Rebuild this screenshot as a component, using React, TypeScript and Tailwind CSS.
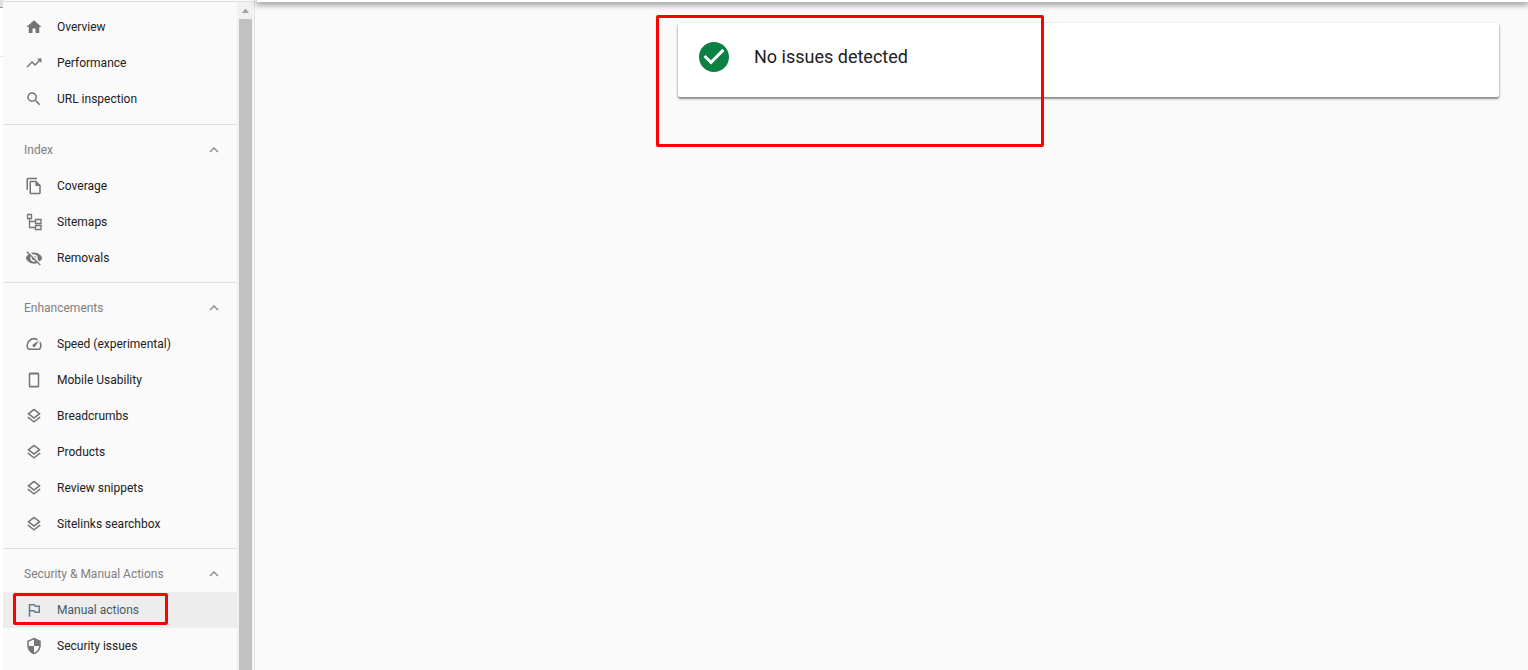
import React from "react";
import type { IconType } from "react-icons";
import {
  MdCheckCircle,
  MdExpandLess,
  MdHome,
  MdOutlineFileCopy,
  MdOutlineLayers,
  MdOutlinedFlag,
  MdSearch,
  MdSecurity,
  MdSpeed,
  MdTrendingUp,
  MdVisibilityOff,
} from "react-icons/md";

type IconProps = { className?: string };

type NavEntry = {
  label: string;
  icon: IconType | ((props: IconProps) => React.JSX.Element);
};

type NavGroup = {
  title?: string;
  items: NavEntry[];
};

const SitemapIcon = ({ className }: IconProps) => (
  <svg className={className} viewBox="0 0 18 18" fill="none" stroke="currentColor" strokeWidth="1.3">
    <path d="M2.500 1.500h4v4h-4zM10.500 6.500h5.500v4h-5.500zM10.500 12.500h5.500v4h-5.500zM4.500 5.500v9h6M4.500 8.500h6" />
  </svg>
);

const PhoneIcon = ({ className }: IconProps) => (
  <svg className={className} viewBox="0 0 24 24" fill="currentColor">
    <path d="M17 2H7c-1.100 0-2 .9-2 2v16c0 1.100.9 2 2 2h10c1.100 0 2-.9 2-2V4c0-1.100-.9-2-2-2zm0 17.500H7v-15h10v15z" />
  </svg>
);

const groups: NavGroup[] = [
  {
    items: [
      { label: "Overview", icon: MdHome },
      { label: "Performance", icon: MdTrendingUp },
      { label: "URL inspection", icon: MdSearch },
    ],
  },
  {
    title: "Index",
    items: [
      { label: "Coverage", icon: MdOutlineFileCopy },
      { label: "Sitemaps", icon: SitemapIcon },
      { label: "Removals", icon: MdVisibilityOff },
    ],
  },
  {
    title: "Enhancements",
    items: [
      { label: "Speed (experimental)", icon: MdSpeed },
      { label: "Mobile Usability", icon: PhoneIcon },
      { label: "Breadcrumbs", icon: MdOutlineLayers },
      { label: "Products", icon: MdOutlineLayers },
      { label: "Review snippets", icon: MdOutlineLayers },
      { label: "Sitelinks searchbox", icon: MdOutlineLayers },
    ],
  },
  {
    title: "Security & Manual Actions",
    items: [
      { label: "Manual actions", icon: MdOutlinedFlag },
      { label: "Security issues", icon: MdSecurity },
    ],
  },
];

const NavItem = ({ label, icon: Icon, active }: NavEntry & { active: boolean }) => (
  <li className={active ? "relative bg-[#ededed]" : ""}>
    <a
      href="#"
      aria-current={active ? "page" : undefined}
      className={`flex h-9 items-center gap-3.5 pl-[22px] ${active ? "text-[#455a64]" : "text-[#212121]"}`}
    >
      <Icon className={`size-[18px] shrink-0 ${active ? "text-[#607d8b]" : "text-[#757575]"}`} />
      {label}
    </a>
    {active && (
      <div className="pointer-events-none absolute top-px left-2.5 h-8 w-[155px] rounded-xs border-3 border-[#ff0000]" />
    )}
  </li>
);

const Sidebar = () => (
  <nav className="min-w-0 flex-1">
    {groups.map((group, i) => (
      <section
        key={i}
        className={`border-t border-[#e0e0e0] pt-[7px] ${group.title ? "pb-1.5" : "pb-[7px]"}`}
      >
        {group.title && (
          <button
            type="button"
            aria-expanded="true"
            className="flex h-9 w-full items-center justify-between pr-3.5 pl-[21px] text-[#808080]"
          >
            {group.title}
            <MdExpandLess className="size-[18px] text-[#8a8a8a]" />
          </button>
        )}
        <ul>
          {group.items.map((item) => (
            <NavItem key={item.label} {...item} active={item.label === "Manual actions"} />
          ))}
        </ul>
      </section>
    ))}
  </nav>
);

const ScrollTrack = () => (
  <div className="flex w-4 flex-col items-center border-t border-[#e0e0e0] bg-[#f1f1f1]">
    <div className="flex h-[17px] items-center">
      <svg className="h-1 w-[7px]" viewBox="0 0 7 4" fill="#a3a3a3">
        <path d="M0 4h7L4 0H3z" />
      </svg>
    </div>
    <div className="w-[13px] flex-1 bg-[#c1c1c1]" />
  </div>
);

export default function App() {
  return (
    <div className="flex h-screen overflow-hidden bg-[#fafafa] font-[Roboto,sans-serif] text-xs text-[#212121]">
      <div className="w-[3px] bg-white">
        <div className="h-2 border-b border-[#9e9e9e] bg-[#e0e0e0]" />
        <div className="h-[49px] border-b border-[#e8e8e8]" />
      </div>
      <aside className="flex w-[252px] shrink-0 border-r border-[#e0e0e0] pt-px">
        <Sidebar />
        <ScrollTrack />
        <div className="w-px" />
      </aside>
      <main className="min-w-0 flex-1">
        <div className="ml-0.5 h-0.5 bg-white shadow-[0_1px_6px_1px_rgba(0,0,0,0.6)]" />
        <div className="relative mt-[21px] mr-[29px] ml-[423px] flex h-[74px] items-start gap-[22px] rounded-xs bg-white px-[18px] pt-4 shadow-[0_2px_2px_rgba(0,0,0,0.35),0_1px_3px_rgba(0,0,0,0.25)]">
          <MdCheckCircle className="size-9 shrink-0 text-[#0b8043]" />
          <h1 className="text-lg leading-9">No issues detected</h1>
          <div className="pointer-events-none absolute -top-2 -left-[22px] h-[132px] w-[388px] rounded-xs border-3 border-[#ff0000]" />
        </div>
      </main>
    </div>
  );
}
